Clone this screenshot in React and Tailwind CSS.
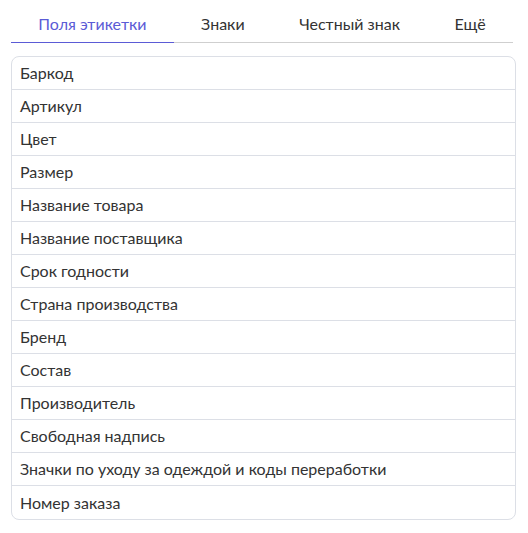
const tabs = ['Поля этикетки', 'Знаки', 'Честный знак', 'Ещё'];

const fields = [
  'Баркод',
  'Артикул',
  'Цвет',
  'Размер',
  'Название товара',
  'Название поставщика',
  'Срок годности',
  'Страна производства',
  'Бренд',
  'Состав',
  'Производитель',
  'Свободная надпись',
  'Значки по уходу за одеждой и коды переработки',
  'Номер заказа',
];

export default function App() {
  return (
    <div className="w-[528px] h-[533px] bg-white pt-[5px] pl-[11px] pr-[12px] font-['Lato','Liberation_Sans',sans-serif] text-[16px] text-[#333]">
      {/* Tabs */}
      <div className="flex w-[502px] border-b border-[#cfcfcf] h-[38px]">
        {tabs.map((t, i) => (
          <div
            key={t}
            className={`flex-auto flex items-center justify-center ${
              i === 0 ? 'text-[#5b5bd6] border-b border-[#5b5bd6] -mb-px' : 'text-[#333]'
            }`}
          >
            {t}
          </div>
        ))}
      </div>

      {/* Field list */}
      <div className="mt-[13px] border border-[#dcdfe6] rounded-lg overflow-hidden">
        {fields.map((f, i) => (
          <div
            key={f}
            className={`h-[33px] flex items-center px-[8px] ${
              i !== fields.length - 1 ? 'border-b border-[#dcdfe6]' : ''
            }`}
          >
            {f}
          </div>
        ))}
      </div>
    </div>
  );
}
